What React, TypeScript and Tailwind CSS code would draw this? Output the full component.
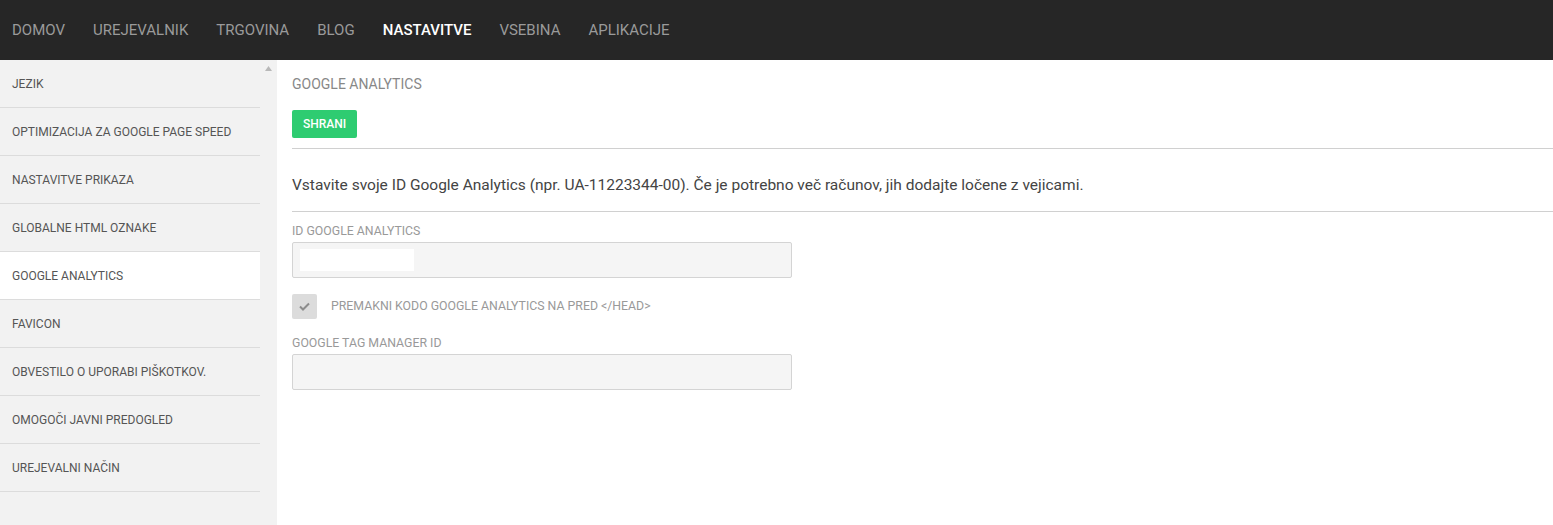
import React from 'react'

const navItems = ['DOMOV', 'UREJEVALNIK', 'TRGOVINA', 'BLOG', 'NASTAVITVE', 'VSEBINA', 'APLIKACIJE']

const sideItems = [
  'JEZIK',
  'OPTIMIZACIJA ZA GOOGLE PAGE SPEED',
  'NASTAVITVE PRIKAZA',
  'GLOBALNE HTML OZNAKE',
  'GOOGLE ANALYTICS',
  'FAVICON',
  'OBVESTILO O UPORABI PIŠKOTKOV.',
  'OMOGOČI JAVNI PREDOGLED',
  'UREJEVALNI NAČIN',
]

const font = { fontFamily: 'Roboto, "Liberation Sans", sans-serif' }

export default function App() {
  return (
    <div className="flex h-[525px] w-[1553px] flex-col overflow-hidden bg-white" style={font}>
      <nav className="flex h-[60px] shrink-0 items-center gap-[28px] bg-[#262626] px-3">
        {navItems.map((item) => (
          <a
            key={item}
            className={
              item === 'NASTAVITVE'
                ? 'text-[15px] font-medium text-white'
                : 'text-[15px] text-[#9a9a9a]'
            }
          >
            {item}
          </a>
        ))}
      </nav>

      <div className="flex min-h-0 flex-1">
        <aside className="flex w-[277px] shrink-0 bg-[#f2f2f2]">
          <ul className="w-[260px]">
            {sideItems.map((item) => (
              <li
                key={item}
                className={
                  'flex h-[48px] items-center border-b border-[#dcdcdc] px-3 text-[12px] text-[#555] ' +
                  (item === 'GOOGLE ANALYTICS' ? 'bg-white' : '')
                }
              >
                {item}
              </li>
            ))}
          </ul>
          <div className="flex flex-1 justify-center pt-[6px]">
            <svg width="7" height="5" viewBox="0 0 7 5">
              <polygon points="3.5,0 7,5 0,5" fill="#b8b8b8" />
            </svg>
          </div>
        </aside>

        <main className="flex-1 pl-[15px] pt-[16px]">
          <h1 className="text-[14px] leading-[16px] text-[#888]">GOOGLE ANALYTICS</h1>
          <button className="mt-[18px] h-[28px] rounded-[2px] bg-[#2ecc71] px-[11px] text-[12px] font-medium text-white">
            SHRANI
          </button>
          <div className="mt-[10px] border-t border-[#d0d0d0]" />
          <p className="pb-[18px] pt-[28px] text-[15.5px] leading-[16px] text-[#444]">
            Vstavite svoje ID Google Analytics (npr. UA-11223344-00). Če je potrebno več računov, jih dodajte ločene z vejicami.
          </p>
          <div className="border-t border-[#d0d0d0]" />

          <label className="mt-[12px] block text-[12.3px] leading-[14px] text-[#999]">ID GOOGLE ANALYTICS</label>
          <div className="mt-[4px] flex h-[36px] w-[500px] items-center rounded-[2px] border border-[#d4d4d4] bg-[#f5f5f5] px-[7px]">
            <div className="h-[22px] w-[114px] bg-white" />
          </div>

          <div className="mt-[16px] flex items-center gap-[14px]">
            <span className="flex h-[25px] w-[25px] items-center justify-center rounded-[2px] bg-[#dcdcdc]">
              <svg width="11" height="9" viewBox="0 0 11 9">
                <path d="M1 4.5 L4 7.5 L10 1.5" fill="none" stroke="#8c8c8c" strokeWidth="2" />
              </svg>
            </span>
            <span className="text-[12.3px] text-[#999]">PREMAKNI KODO GOOGLE ANALYTICS NA PRED &lt;/HEAD&gt;</span>
          </div>

          <label className="mt-[17px] block text-[12.3px] leading-[14px] text-[#999]">GOOGLE TAG MANAGER ID</label>
          <div className="mt-[4px] h-[36px] w-[500px] rounded-[2px] border border-[#d4d4d4] bg-[#f5f5f5]" />
        </main>
      </div>
    </div>
  )
}
